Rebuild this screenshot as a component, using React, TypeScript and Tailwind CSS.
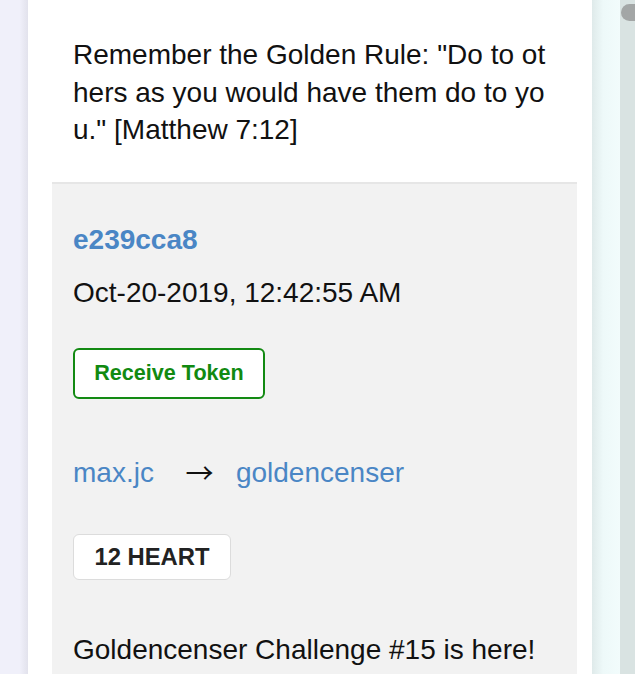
import React from "react";

export default function App() {
  return (
    <div
      className="flex h-[674px] w-[635px] overflow-hidden bg-white"
      style={{ fontFamily: '"Liberation Sans", Arial, sans-serif' }}
    >
      <div className="h-full w-[28px] shrink-0 bg-gradient-to-r from-[#f0f0fa] from-70% to-[#e2e2ec]" />
      <div className="h-full w-[564px] shrink-0 bg-white pl-[24px] pr-[15px]">
        <div className="px-[21px] pt-[36px] pb-[33px] text-[28px] leading-[37.5px] text-[#111] break-all">
          Remember the Golden Rule: "Do to others as you would have them do to you." [Matthew 7:12]
        </div>
        <div className="border-t-2 border-[#e6e6e6] bg-[#f2f2f2] pl-[21px] pr-[21px] pt-[41px] pb-[40px]">
          <div className="text-[28px] font-bold leading-[30px] text-[#4a86c5]">e239cca8</div>
          <div className="mt-[19px] text-[28px] leading-[37.5px] text-[#111]">Oct-20-2019, 12:42:55 AM</div>
          <div className="mt-[37px] flex h-[51px] w-[192px] items-center justify-center rounded-[6px] border-2 border-[#138a13] bg-white text-[21.6px] font-bold text-[#118a11]">
            Receive Token
          </div>
          <div className="mt-[55px] flex items-center text-[28px] leading-[37.5px]">
            <span className="text-[#4a86c5]">max.jc</span>
            <span
              className="ml-[31px] mr-[22px] inline-flex w-[29px] justify-center text-[#111]"
              style={{ fontFamily: '"Noto Sans CJK JP", "DejaVu Sans", sans-serif' }}
            >
              →
            </span>
            <span className="text-[#4a86c5]">goldencenser</span>
          </div>
          <div className="mt-[42px] flex h-[46px] w-[158px] items-center justify-center rounded-[6px] border border-[#dcdcdc] bg-white text-[23.8px] font-bold text-[#222]">
            12 HEART
          </div>
          <div className="mt-[51px] text-[28px] leading-[37.5px] text-[#111]">
            Goldencenser Challenge #15 is here!
          </div>
        </div>
      </div>
      <div className="h-full w-[28px] shrink-0 bg-gradient-to-r from-[#dfeaea] via-[#eef9f9] via-40% to-[#f2fcfc]" />
      <div className="h-full w-[15px] shrink-0 overflow-hidden bg-[#d9e3e2] pt-[4px] pl-[1px]">
        <div className="h-[17px] w-[24px] rounded-full bg-[#a3a6a6]" />
      </div>
    </div>
  );
}
